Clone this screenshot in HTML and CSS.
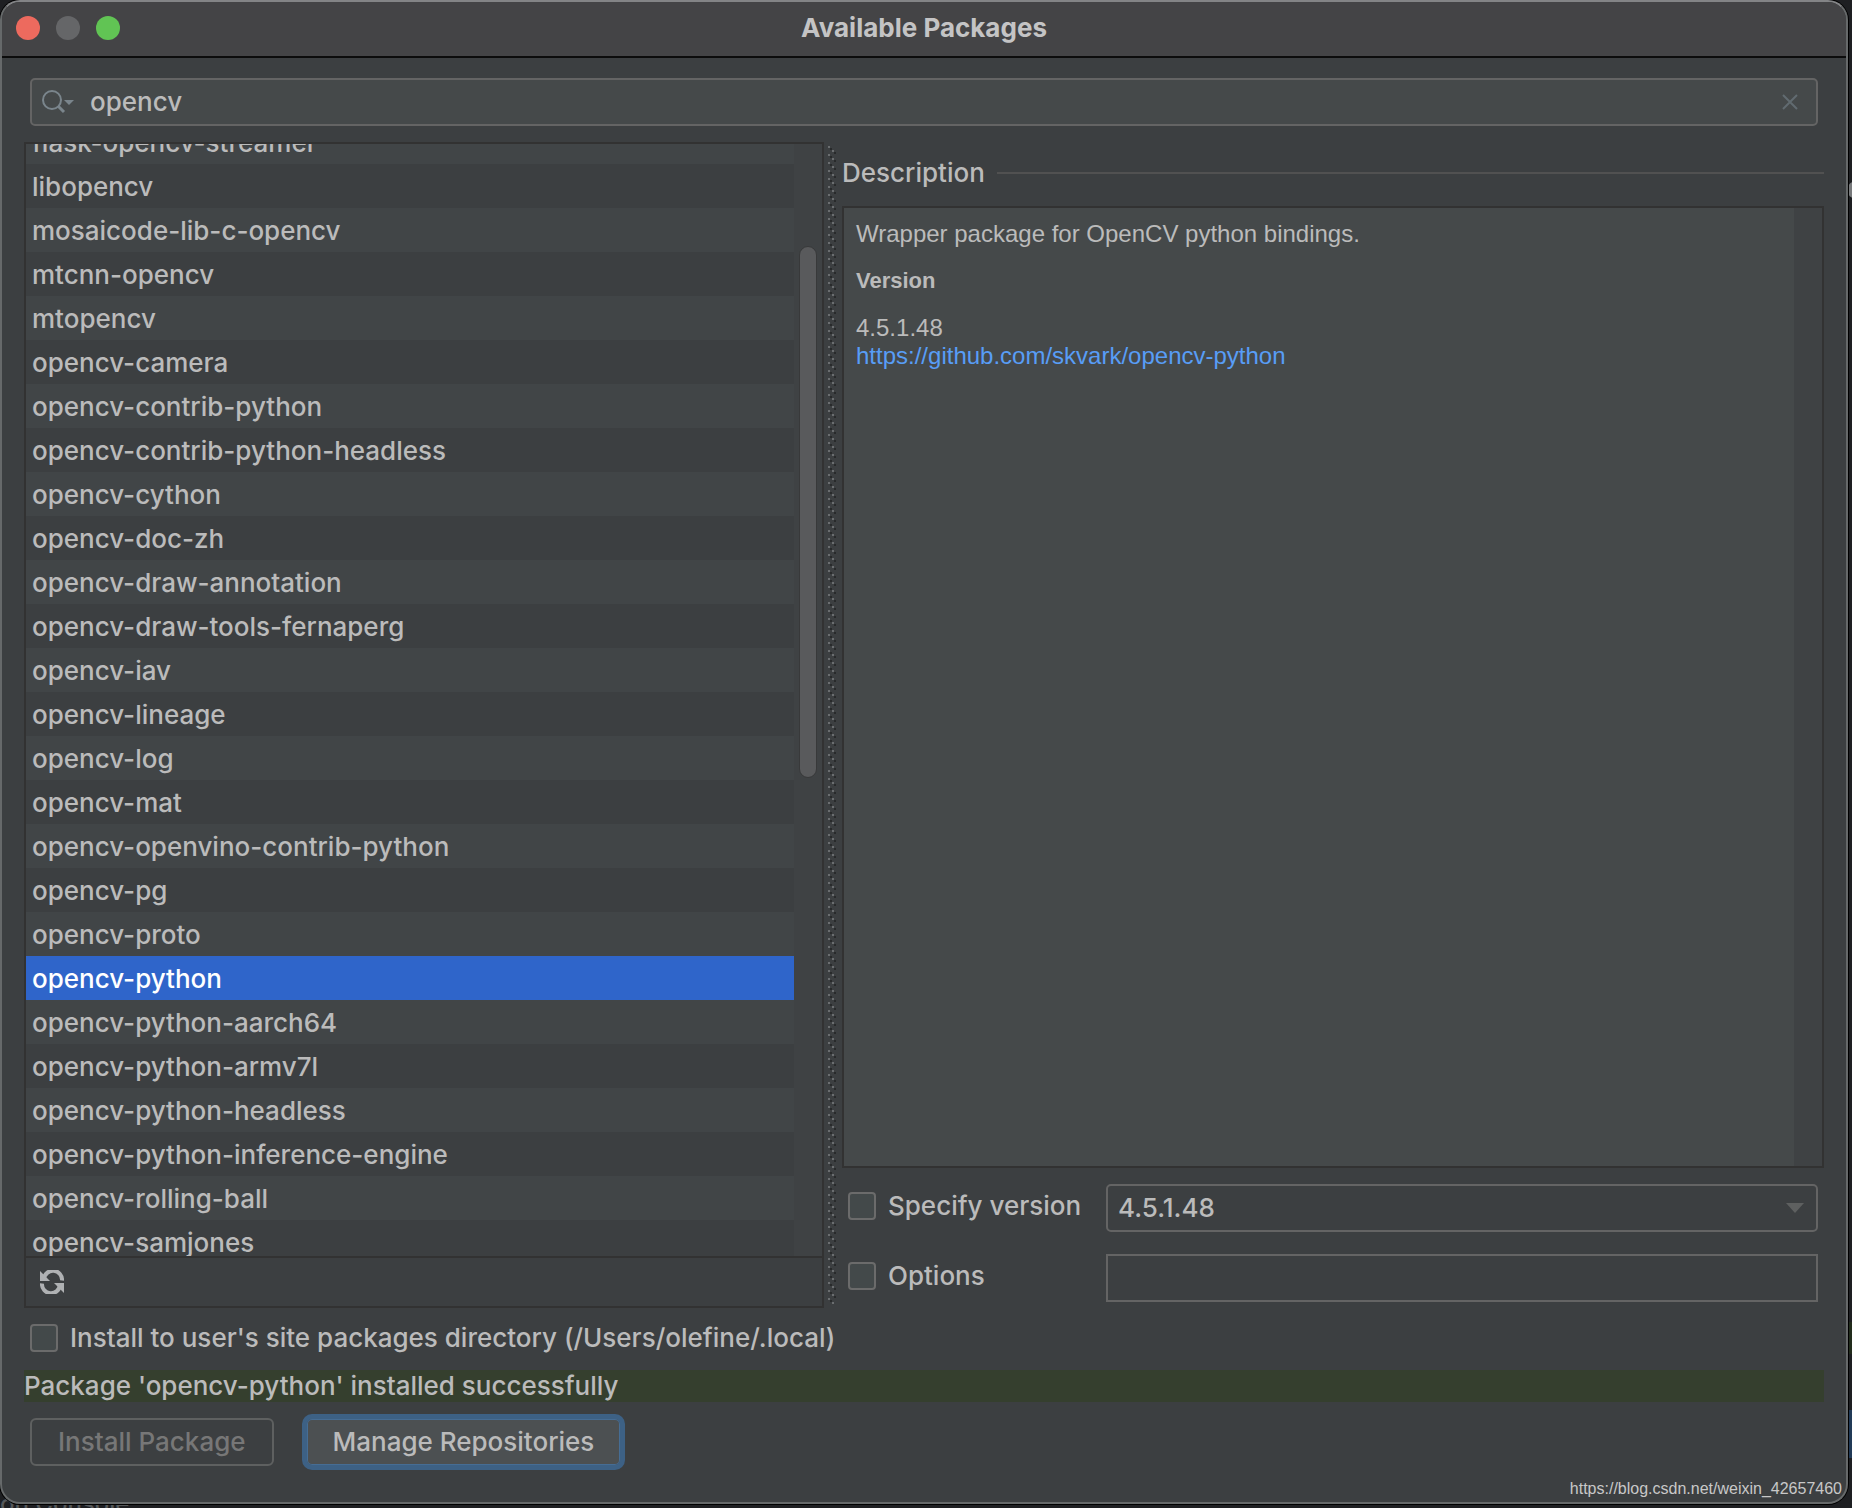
FILE: index.html
```html
<!DOCTYPE html>
<html lang="en">
<head>
<meta charset="utf-8">
<title>Available Packages</title>
<link rel="stylesheet" href="styles.css">
</head>
<body>
<div class="behind" aria-hidden="true">
  <span class="behind-tab">on Console</span>
  <span class="behind-gear"></span>
  <span class="behind-strip"></span>
  <span class="behind-selection"></span>
</div>
<main class="window">
  <header class="titlebar">
    <div class="lights">
      <button class="light close" aria-label="Close"></button>
      <button class="light minimize" aria-label="Minimize" disabled></button>
      <button class="light maximize" aria-label="Zoom"></button>
    </div>
    <h1 class="title">Available Packages</h1>
  </header>

  <div class="content">
    <div class="search">
      <svg class="search-icon" width="34" height="26" viewBox="0 0 34 26" aria-hidden="true">
        <circle cx="10" cy="11" r="9" fill="none" stroke="#7a858c" stroke-width="2"/>
        <path d="M16 17l6 6" stroke="#7a858c" stroke-width="3" fill="none"/>
        <path d="M22 11h10l-5 5z" fill="#7a858c"/>
      </svg>
      <input class="search-input" type="text" value="opencv" aria-label="Search packages">
      <button class="clear" aria-label="Clear search">
        <svg width="16" height="16" viewBox="0 0 16 16"><path d="M1 1l14 14M15 1L1 15" stroke="#616b70" stroke-width="2" fill="none"/></svg>
      </button>
    </div>

    <div class="split">
      <section class="list-panel">
        <div class="list-view">
          <ul class="packages" role="listbox" aria-label="Packages">
            <li role="option">flask-opencv-streamer</li>
            <li role="option">libopencv</li>
            <li role="option">mosaicode-lib-c-opencv</li>
            <li role="option">mtcnn-opencv</li>
            <li role="option">mtopencv</li>
            <li role="option">opencv-camera</li>
            <li role="option">opencv-contrib-python</li>
            <li role="option">opencv-contrib-python-headless</li>
            <li role="option">opencv-cython</li>
            <li role="option">opencv-doc-zh</li>
            <li role="option">opencv-draw-annotation</li>
            <li role="option">opencv-draw-tools-fernaperg</li>
            <li role="option">opencv-iav</li>
            <li role="option">opencv-lineage</li>
            <li role="option">opencv-log</li>
            <li role="option">opencv-mat</li>
            <li role="option">opencv-openvino-contrib-python</li>
            <li role="option">opencv-pg</li>
            <li role="option">opencv-proto</li>
            <li role="option" class="selected" aria-selected="true">opencv-python</li>
            <li role="option">opencv-python-aarch64</li>
            <li role="option">opencv-python-armv7l</li>
            <li role="option">opencv-python-headless</li>
            <li role="option">opencv-python-inference-engine</li>
            <li role="option">opencv-rolling-ball</li>
            <li role="option">opencv-samjones</li>
          </ul>
          <div class="track"><div class="thumb"></div></div>
        </div>
        <div class="toolbar">
          <button class="refresh" aria-label="Reload list of packages">
            <svg width="24" height="24" viewBox="0 0 24 24" fill="none">
              <path d="M4 9A9 9 0 0 1 22 10.500" stroke="#afb1b3" stroke-width="4"/>
              <path d="M0 1v10h10z" fill="#afb1b3"/>
              <path d="M20 15A9 9 0 0 1 2 13.500" stroke="#afb1b3" stroke-width="4"/>
              <path d="M24 23V13H14z" fill="#afb1b3"/>
            </svg>
          </button>
        </div>
      </section>

      <svg class="divider" width="8" aria-hidden="true">
        <defs>
          <pattern id="grip" width="8" height="8" patternUnits="userSpaceOnUse">
            <path d="M0 0h2v2H0zM4 4h2v2H4z" fill="#6b6e70"/>
            <path d="M2 2h2v2H2zM6 6h2v2H6z" fill="#282a2b"/>
          </pattern>
        </defs>
        <rect width="8" height="100%" fill="url(#grip)"/>
      </svg>

      <section class="details">
        <h2 class="section-title">Description</h2>
        <div class="description">
          <div class="description-text">
            <p>Wrapper package for OpenCV python bindings.</p>
            <h3>Version</h3>
            <p>4.5.1.48<br><a href="https://github.com/skvark/opencv-python">https://github.com/skvark/opencv-python</a></p>
          </div>
          <div class="track"></div>
        </div>
        <div class="fields">
          <label class="check"><input type="checkbox">Specify version</label>
          <div class="combo">
            <select aria-label="Version"><option>4.5.1.48</option></select>
            <svg class="arrow" width="18" height="10" viewBox="0 0 18 10" aria-hidden="true"><path d="M0 0h18l-9 10z" fill="#5e6060"/></svg>
          </div>
          <label class="check"><input type="checkbox">Options</label>
          <input class="options" type="text" aria-label="Options value">
        </div>
      </section>
    </div>

    <label class="check user-site"><input type="checkbox">Install to user's site packages directory (/Users/olefine/.local)</label>
    <p class="status">Package 'opencv-python' installed successfully</p>
    <div class="actions">
      <button class="btn install" disabled>Install Package</button>
      <button class="btn manage">Manage Repositories</button>
    </div>
  </div>
</main>
<span class="watermark">https://blog.csdn.net/weixin_42657460</span>
</body>
</html>
```
FILE: styles.css
```css
* {
  box-sizing: border-box;
}

body {
  margin: 0;
  height: 100vh;
  padding: 0 4px 4px 0;
  position: relative;
  overflow: hidden;
  background: #1e1f22;
  color: #bbbbbb;
  font: 450 26px/32px Inter, "Liberation Sans", sans-serif;
}

h1, h2, h3, p, ul {
  margin: 0;
  padding: 0;
  font-size: inherit;
}

button, input, select {
  margin: 0;
  padding: 0;
  border: 0;
  background: none;
  color: inherit;
  font: inherit;
  outline: none;
}

/* Slivers of the editor visible around the dialog */
.behind-tab {
  position: absolute;
  left: 0;
  bottom: -12px;
  color: #55585a;
  font-size: 24px;
}

.behind-gear {
  position: absolute;
  right: -10px;
  top: 182px;
  width: 14px;
  height: 16px;
  border: 4px solid #77797b;
  border-radius: 6px;
}

.behind-strip {
  position: absolute;
  right: 0;
  top: 1322px;
  width: 4px;
  height: 32px;
  background: #222c1c;
}

.behind-selection {
  position: absolute;
  right: 0;
  top: 1410px;
  width: 4px;
  height: 48px;
  background: #213a57;
}

.window {
  position: relative;
  height: 100%;
  display: flex;
  flex-direction: column;
  border: 2px solid #66696a;
  border-top-color: #838486;
  border-radius: 20px;
  background: #3c3f41;
  box-shadow: 0 0 0 1px #000000;
  overflow: hidden;
}

.titlebar {
  flex: none;
  height: 56px;
  padding: 0 14px 2px;
  display: grid;
  grid-template-columns: 1fr auto 1fr;
  align-items: center;
  background: #444446;
  border-bottom: 2px solid #0c0c0c;
}

.lights {
  display: flex;
  gap: 16px;
}

.light {
  width: 24px;
  height: 24px;
  border-radius: 50%;
}

.close { background: #ed6a5e; }
.minimize { background: #656668; }
.maximize { background: #61c454; }

.title {
  color: #c4c4c5;
  font-weight: 650;
}

.content {
  flex: 1;
  min-height: 0;
  display: flex;
  flex-direction: column;
  padding: 20px 22px 32px;
}

.search {
  flex: none;
  height: 48px;
  margin: 0 6px 16px;
  padding: 0 18px 0 10px;
  display: flex;
  align-items: center;
  gap: 14px;
  border: 2px solid #646464;
  border-radius: 5px;
  background: #45494a;
}

.search-input {
  flex: 1;
}

.clear {
  display: flex;
}

.split {
  flex: 1;
  min-height: 0;
  display: grid;
  grid-template-columns: 800px 8px minmax(0, 1fr);
}

.list-panel {
  min-height: 0;
  display: flex;
  flex-direction: column;
  border: 2px solid #323232;
}

.list-view {
  flex: 1;
  min-height: 0;
  display: flex;
  overflow: hidden;
}

.packages {
  flex: 1;
  margin-top: -24px;
  list-style: none;
}

.packages li {
  height: 44px;
  padding-left: 6px;
  line-height: 46px;
}

.packages li:nth-child(odd) {
  background: #414547;
}

.packages li.selected {
  background: #2f65ca;
  color: #ffffff;
}

.track {
  flex: none;
  width: 28px;
  background: #3f4244;
}

.thumb {
  width: 18px;
  height: 532px;
  margin: 102px auto 0;
  border: 1px solid #38393a;
  border-radius: 9px;
  background: #595a5c;
}

.toolbar {
  flex: none;
  height: 50px;
  padding-left: 14px;
  display: flex;
  align-items: center;
  border-top: 2px solid #323232;
}

.refresh {
  display: flex;
}

.divider {
  height: calc(100% - 8px);
  align-self: center;
  margin-left: 4px;
}

.details {
  min-height: 0;
  display: flex;
  flex-direction: column;
  margin-left: 10px;
}

.section-title {
  flex: none;
  display: flex;
  align-items: center;
  gap: 12px;
  margin: 15px 0 17px;
  font-weight: inherit;
}

.section-title::after {
  content: "";
  flex: 1;
  height: 2px;
  background: #515151;
}

.description {
  flex: 1;
  display: flex;
  border: 2px solid #323232;
  background: #45494a;
  font: 24px/28px "Liberation Sans", Arial, sans-serif;
}

.description-text {
  flex: 1;
  display: flex;
  flex-direction: column;
  gap: 19px;
  padding: 12px;
}

.description h3 {
  font-size: 22px;
}

.description a {
  color: #589df6;
  text-decoration: none;
}

.fields {
  flex: none;
  display: grid;
  grid-template-columns: 258px 1fr;
  row-gap: 22px;
  align-items: center;
  padding: 16px 6px 6px;
}

.check {
  display: flex;
  align-items: center;
  gap: 12px;
}

.fields .check {
  padding-bottom: 4px;
}

.check input {
  appearance: none;
  width: 28px;
  height: 28px;
  border: 2px solid #6b6b6b;
  border-radius: 4px;
  background: #43494a;
}

.combo {
  display: grid;
  align-items: center;
}

.combo select {
  grid-area: 1 / 1;
  appearance: none;
  width: 100%;
  height: 48px;
  padding-left: 10px;
  border: 2px solid #646464;
  border-radius: 5px;
}

.arrow {
  grid-area: 1 / 1;
  justify-self: end;
  margin-right: 14px;
  pointer-events: none;
}

.options {
  height: 48px;
  padding: 0 12px;
  border: 2px solid #646464;
}

.user-site {
  flex: none;
  margin: 14px 6px 16px;
}

.status {
  flex: none;
  height: 32px;
  background: #353f2e;
}

.actions {
  flex: none;
  display: flex;
  align-items: center;
  gap: 28px;
  padding: 12px 6px 0;
}

.btn {
  height: 48px;
  padding: 0 26px;
  border: 2px solid #5e6060;
  border-radius: 6px;
}

.install {
  color: #777777;
}

.manage {
  height: 56px;
  border: 5px solid #3d6185;
  border-radius: 10px;
  background: #4c5052;
  box-shadow: inset 0 0 0 1px #466d94;
}

.watermark {
  position: absolute;
  right: 10px;
  bottom: 9px;
  font: 16px/20px "Liberation Sans", Arial, sans-serif;
  color: #c8c8c8;
}
```
